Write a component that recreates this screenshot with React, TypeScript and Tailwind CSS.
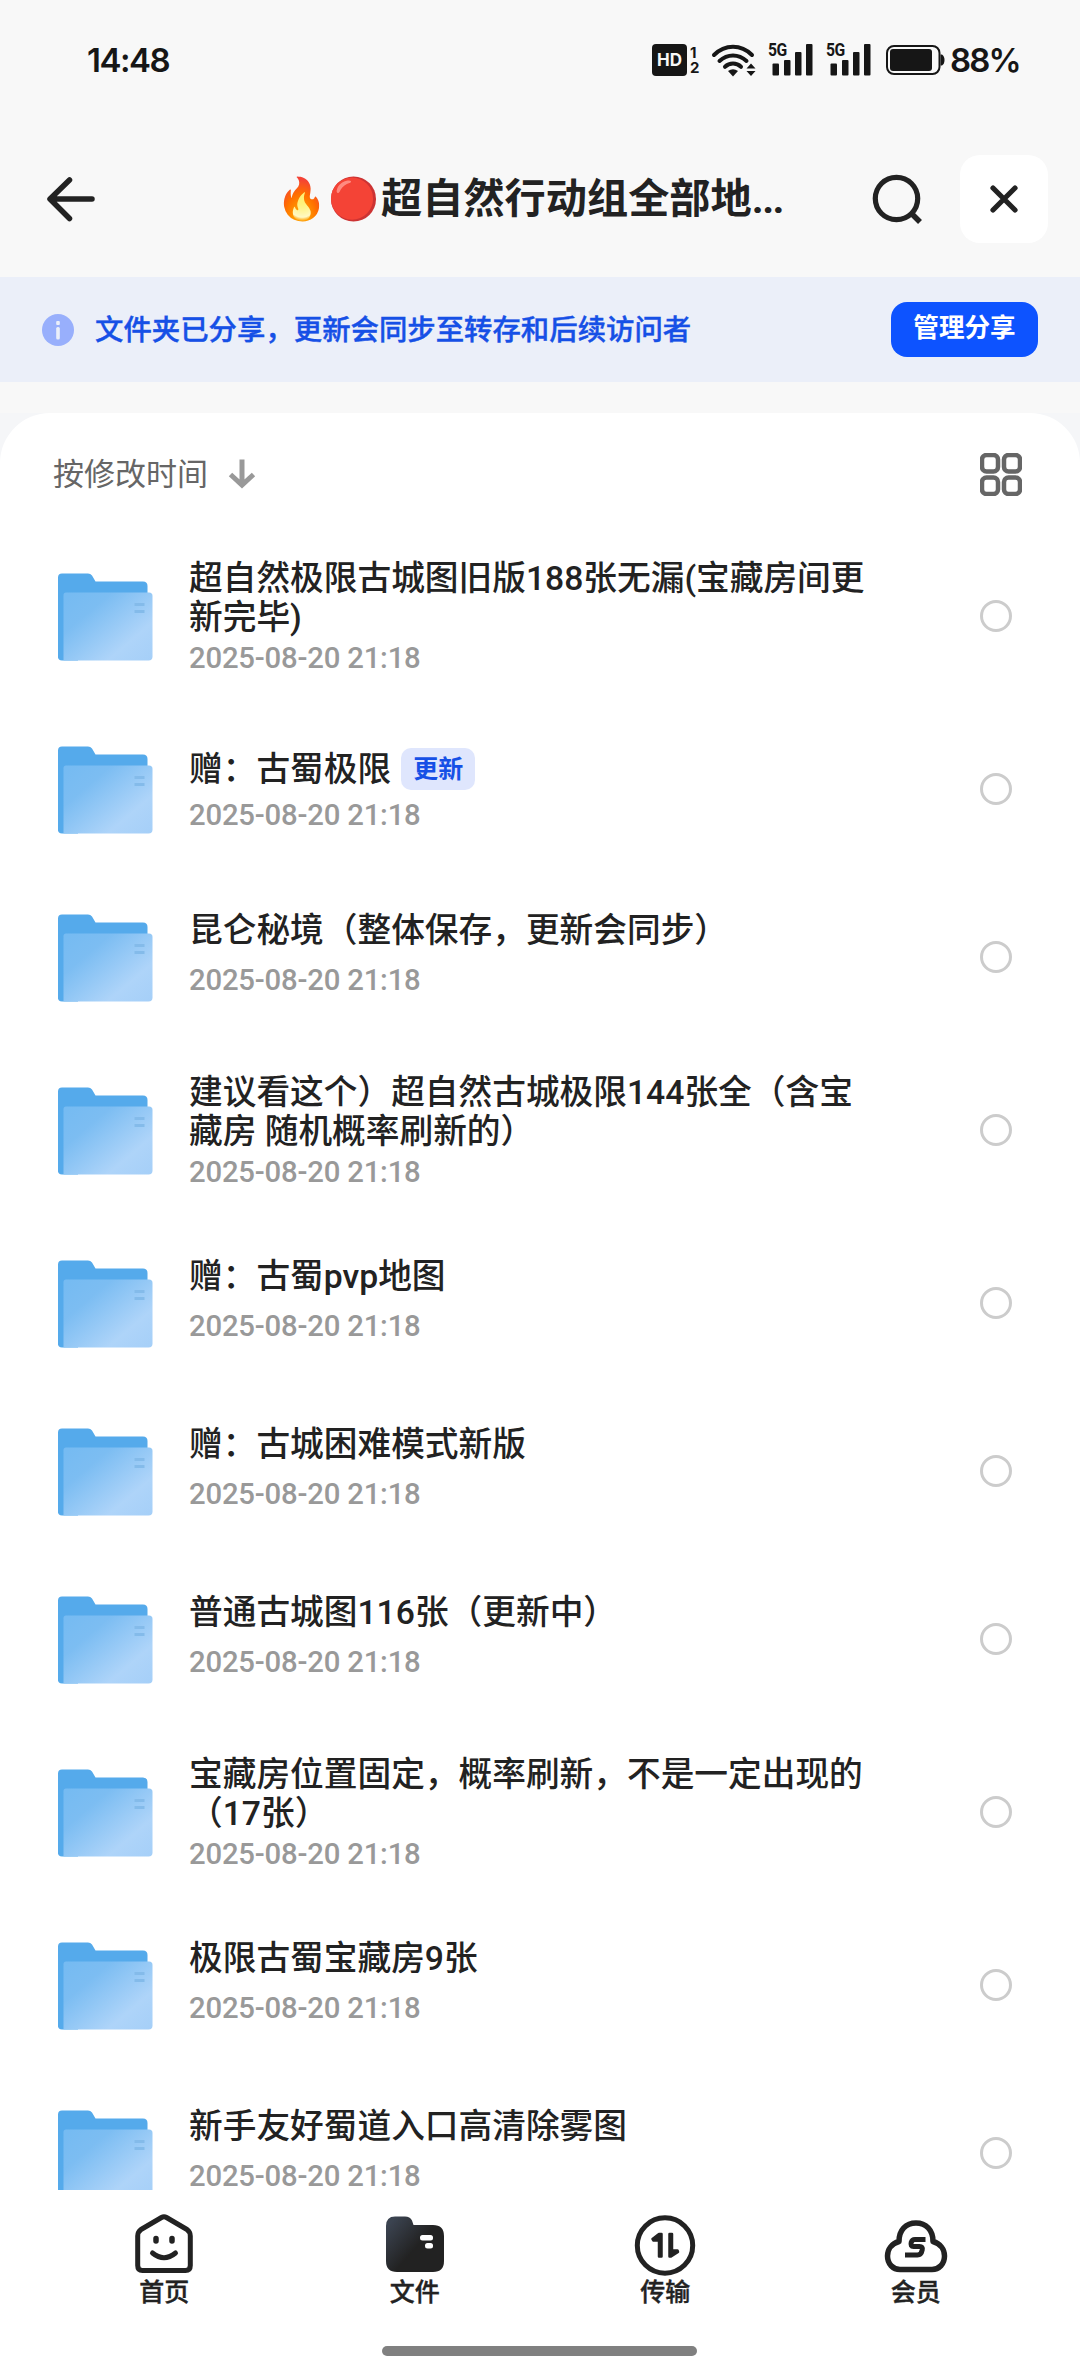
import React from "react";

interface FolderItem {
	name: string;
	time: string;
	badge?: string;
	twoLines?: boolean;
}

const TIME = "2025-08-20 21:18";

const FOLDERS: FolderItem[] = [
	{
		name: "超自然极限古城图旧版188张无漏(宝藏房间更新完毕)",
		time: TIME,
		twoLines: true,
	},
	{ name: "赠：古蜀极限", time: TIME, badge: "更新" },
	{ name: "昆仑秘境（整体保存，更新会同步）", time: TIME },
	{
		name: "建议看这个）超自然古城极限144张全（含宝藏房 随机概率刷新的）",
		time: TIME,
		twoLines: true,
	},
	{ name: "赠：古蜀pvp地图", time: TIME },
	{ name: "赠：古城困难模式新版", time: TIME },
	{ name: "普通古城图116张（更新中）", time: TIME },
	{
		name: "宝藏房位置固定，概率刷新，不是一定出现的（17张）",
		time: TIME,
		twoLines: true,
	},
	{ name: "极限古蜀宝藏房9张", time: TIME },
	{ name: "新手友好蜀道入口高清除雾图", time: TIME },
];

function WifiIcon() {
	return (
		<svg width="46" height="34" viewBox="0 0 46 34" fill="none">
			<g stroke="#161616" strokeWidth="4" strokeLinecap="round">
				<path d="M3 12C14 1 30 1 41 12" />
				<path d="M8.500 18C16.500 10.500 27.500 10.500 35.500 18" />
				<path d="M14 23.800C18.500 19.500 25.500 19.500 30 23.800" />
			</g>
			<path d="M17 28Q22 24.500 27 28L22 33.500Z" fill="#161616" />
			<path d="M40 20.500L44.500 25.500H35.500ZM40 33L35.500 28H44.500Z" fill="#161616" />
		</svg>
	);
}

function SignalIcon() {
	return (
		<div className="relative h-8 w-[45px]">
			<span className="absolute -top-[3px] left-0 origin-left scale-x-85 font-['Roboto',sans-serif] text-[18.500px] leading-[18px] font-bold tracking-[-0.500px]">
				5G
			</span>
			<svg
				className="absolute inset-0"
				width="45"
				height="32"
				viewBox="0 0 45 32"
				fill="#161616"
			>
				<rect x="4.500" y="19.500" width="6.500" height="12" rx="1" />
				<rect x="16" y="16" width="6.500" height="15.500" rx="1" />
				<rect x="27" y="8" width="6.500" height="23.500" rx="1" />
				<rect x="38" y="0" width="6.500" height="31.500" rx="1" />
			</svg>
		</div>
	);
}

function BatteryIcon() {
	return (
		<svg width="60" height="30" viewBox="0 0 60 30" fill="none">
			<rect x="1" y="1" width="52.500" height="28" rx="7" stroke="#161616" strokeWidth="2" />
			<rect x="4" y="4" width="42" height="22" rx="3" fill="#161616" />
			<path d="M54.500 9.500H56Q58.500 11 58.500 15T56 20.500H54.500Z" fill="#161616" />
		</svg>
	);
}

function StatusBar() {
	return (
		<div className="flex h-[120px] items-center pl-[87px] font-['Inter','Noto_Sans_CJK_SC',sans-serif] text-[#161616]">
			<span className="w-[90px] text-[33px] leading-none font-semibold tracking-[-1.500px]">
				14:48
			</span>
			<div className="ml-[475px] flex h-8 w-[35px] items-center justify-center rounded bg-[#161616] text-[17px] leading-none font-bold text-[#f8f8f8]">
				HD
			</div>
			<div className="ml-[3px] flex w-[18px] flex-col text-[15px] leading-[15px] font-bold">
				<span className="-mt-px">1</span>
				<span>2</span>
			</div>
			<div className="ml-[3px]">
				<WifiIcon />
			</div>
			<div className="ml-[11px] flex gap-[13px]">
				<SignalIcon />
				<SignalIcon />
			</div>
			<div className="ml-[15px]">
				<BatteryIcon />
			</div>
			<span className="ml-[4px] text-[33px] leading-none font-semibold tracking-[-1.900px]">
				88%
			</span>
		</div>
	);
}

function Header() {
	return (
		<header className="flex h-[157px] shrink-0 items-center pl-[45px] text-[#222]">
			<svg width="52" height="48" viewBox="0 0 52 48" fill="none">
				<path
					d="M24.500 5L5 24L24.500 43.500M6 24H47"
					stroke="#222"
					strokeWidth="5.500"
					strokeLinecap="round"
					strokeLinejoin="round"
				/>
			</svg>
			<h1 className="ml-[182px] flex w-[510px] items-center text-[41.200px] leading-[60px] font-bold whitespace-nowrap">
				<span className="w-[102px] -translate-x-[3px] text-[41px] tracking-[0.500px]">🔥🔴</span>
				<span>超自然行动组全部地</span>
				<span className="tracking-[-1.500px]">...</span>
			</h1>
			<svg className="ml-[81px]" width="54" height="54" viewBox="0 0 54 54" fill="none">
				<circle cx="26.500" cy="26.500" r="21.200" stroke="#222" strokeWidth="5.200" />
				<path d="M42 42L50 50" stroke="#222" strokeWidth="5.500" />
			</svg>
			<button
				type="button"
				className="ml-[36px] flex size-[88px] items-center justify-center rounded-[20px] bg-white"
			>
				<svg width="32" height="32" viewBox="0 0 32 32" fill="none">
					<path
						d="M5 5L27 27M27 5L5 27"
						stroke="#222"
						strokeWidth="5.200"
						strokeLinecap="round"
					/>
				</svg>
			</button>
		</header>
	);
}

function ShareNotice() {
	return (
		<div className="flex h-[105px] shrink-0 items-center bg-[#ebeff9] pr-[42px] pl-[42px]">
			<svg width="32" height="32" viewBox="0 0 32 32">
				<circle cx="16" cy="16" r="16" fill="#98affc" />
				<rect x="14.200" y="7" width="3.600" height="4" rx="1" fill="#ebeff9" />
				<rect x="14.200" y="13" width="3.600" height="12.500" rx="1.500" fill="#ebeff9" />
			</svg>
			<p className="ml-[21px] pt-[2px] text-[28.400px] leading-[40px] font-medium text-[#1650e6] [-webkit-text-stroke:0.4px_#1650e6]">
				文件夹已分享，更新会同步至转存和后续访问者
			</p>
			<button
				type="button"
				className="ml-auto h-[55px] w-[147px] rounded-2xl bg-[#0d53ff] pb-[2px] text-[25.600px] leading-none font-bold text-white"
			>
				管理分享
			</button>
		</div>
	);
}

function SortBar() {
	return (
		<div className="flex h-[114px] shrink-0 items-center pt-[8px] pr-[58px] pl-[53px]">
			<span className="pt-px text-[31px] leading-[44px] text-[#666]">按修改时间</span>
			<svg className="ml-[20px]" width="28" height="30" viewBox="0 0 28 30" fill="none">
				<path d="M14 0.500V26M2.500 15.500L14 26L25.500 15.500" stroke="#999" strokeWidth="5" />
			</svg>
			<svg
				className="ml-auto"
				width="42"
				height="43"
				viewBox="0 0 42 43"
				fill="none"
				stroke="#666"
				strokeWidth="4.500"
			>
				<rect x="2" y="2" width="16" height="16.500" rx="4.500" />
				<rect x="24" y="2" width="16" height="16.500" rx="4.500" />
				<rect x="2" y="24.500" width="16" height="16.500" rx="4.500" />
				<rect x="24" y="24.500" width="16" height="16.500" rx="4.500" />
			</svg>
		</div>
	);
}

function FolderIcon() {
	return (
		<svg width="95" height="88" viewBox="0 0 95 88">
			<defs>
				<linearGradient id="folder-front" x1="0" y1="0.100" x2="1" y2="1">
					<stop offset="0" stopColor="#76bbf2" />
					<stop offset="0.250" stopColor="#7cbdf2" />
					<stop offset="0.720" stopColor="#aed4f9" />
					<stop offset="1" stopColor="#a5cff8" />
				</linearGradient>
			</defs>
			<path
				d="M4 0.500H30Q32.500 0.500 34 2.500L37.500 8.500H85Q89.500 8.500 89.500 13V84H4Q0 87.500 0 83V4.500Q0 0.500 4 0.500Z"
				fill="#55aaeb"
			/>
			<path d="M0 80V83.500Q0 87.500 4 87.500H20V80Z" fill="#55aaeb" />
			<path
				d="M8 19.500H91Q94.500 19.500 94.500 23V83.500Q94.500 87.500 90.500 87.500H5.500V22Q5.500 19.500 8 19.500Z"
				fill="url(#folder-front)"
			/>
			<path d="M76.500 31.500H86.500M76.500 38.500H86.500" stroke="#84bbea" strokeWidth="2.800" />
		</svg>
	);
}

function FolderRow({ item }: { item: FolderItem }) {
	const textTop = item.twoLines ? "pt-[32px]" : item.badge ? "pt-[45px]" : "pt-[38px]";
	const timeTop = item.twoLines ? "mt-[4px]" : item.badge ? "mt-[10px]" : "mt-[14px]";
	return (
		<li
			className={`flex shrink-0 pl-[58px] ${item.twoLines ? "h-[178px]" : "h-[168px]"}`}
		>
			<div className="flex items-center pt-[2px]">
				<FolderIcon />
			</div>
			<div className={`ml-[36px] w-[690px] ${textTop}`}>
				<div className="flex items-center">
					<p className="text-[33.700px] leading-[39.300px] font-medium text-[#222]">
						{item.name}
					</p>
					{item.badge && (
						<span className="-mt-[6px] -mb-1 ml-[10px] flex h-[42px] w-[74px] items-center justify-center rounded-[10px] bg-[#dfe6fd] pt-px text-[25px] leading-none font-bold text-[#1650e6]">
							{item.badge}
						</span>
					)}
				</div>
				<p
					className={`text-[29.300px] leading-[33px] font-medium tracking-[-0.200px] text-[#999] ${timeTop}`}
				>
					{item.time}
				</p>
			</div>
			<div className="ml-[101px] flex items-center">
				<span className="size-8 rounded-full border-[3px] border-[#ccc]" />
			</div>
		</li>
	);
}

function HomeIcon() {
	return (
		<svg width="64" height="64" viewBox="0 0 64 64" fill="none" stroke="#222" strokeWidth="5" strokeLinecap="round">
			<path
				d="M29.500 5.500Q32 4 34.500 5.500L55 17.500Q58.300 20 58.300 24V53.500Q58.300 58.500 53.500 58.500H10.500Q5.700 58.500 5.700 53.500V24Q5.700 20 9 17.500Z"
				strokeLinejoin="round"
			/>
			<path d="M24 26.500V29M40 26.500V29" strokeWidth="5.500" />
			<path d="M20.500 41Q32 50.500 43.500 41" />
		</svg>
	);
}

function FilesIcon() {
	return (
		<svg width="64" height="64" viewBox="0 0 64 64">
			<defs>
				<linearGradient id="files-tab" x1="0" y1="0.200" x2="0.600" y2="0.700">
					<stop offset="0" stopColor="#3b4350" />
					<stop offset="0.800" stopColor="#222" />
				</linearGradient>
			</defs>
			<path
				d="M12 4.500H22Q27 4.500 29 8.500L30.500 13H50Q61 13 61 24V49Q61 60 50 60H14Q3 60 3 49V14Q3 4.500 12 4.500Z"
				fill="url(#files-tab)"
			/>
			<rect x="37" y="23" width="13" height="5.500" rx="2.500" fill="#fff" />
			<rect x="42" y="31" width="8" height="5.500" rx="2.500" fill="#fff" />
		</svg>
	);
}

function TransferIcon() {
	return (
		<svg width="64" height="64" viewBox="0 0 64 64" fill="none">
			<circle cx="32" cy="33.500" r="27.700" stroke="#222" strokeWidth="5" />
			<g fill="#222" stroke="#222" strokeWidth="2.500" strokeLinejoin="round">
				<path d="M28.500 22V44.500H26V28.500H20.500L19.500 27L26 22Z" />
				<path d="M36.500 22H39V38.500H44.500L45 40L38 44.500H36.500Z" />
			</g>
		</svg>
	);
}

function MemberIcon() {
	return (
		<svg width="68" height="64" viewBox="0 0 68 64" fill="none" stroke="#222">
			<path
				d="M17 29.500C17 18 24 11 34 11S51 18 51 29.500C58 31.500 62.500 37 62.500 44C62.500 52 57 57.500 50 57.500H18C11 57.500 5.500 52 5.500 44C5.500 37 10 31.500 17 29.500Z"
				strokeWidth="5.500"
				strokeLinejoin="round"
			/>
			<path
				d="M43.500 27.500H33Q30 27.500 29.200 30.500Q28.200 34.500 31.500 34.500H37.500Q41 34.500 40.200 38Q39.200 43 35.500 43H23"
				strokeWidth="5"
			/>
		</svg>
	);
}

const TABS = [
	{ label: "首页", Icon: HomeIcon },
	{ label: "文件", Icon: FilesIcon },
	{ label: "传输", Icon: TransferIcon },
	{ label: "会员", Icon: MemberIcon },
];

function TabBar() {
	return (
		<nav className="flex px-[39px] pt-[22px]">
			{TABS.map(({ label, Icon }) => (
				<button
					key={label}
					type="button"
					className="flex flex-1 flex-col items-center text-[#222]"
				>
					<Icon />
					<span className="pt-px text-[25px] leading-[32px] font-medium [-webkit-text-stroke:0.4px_#222]">
						{label}
					</span>
				</button>
			))}
		</nav>
	);
}

export default function App() {
	return (
		<div className="flex h-[2374px] w-[1080px] flex-col overflow-hidden bg-[#f8f8f8] font-['Roboto','Noto_Sans_CJK_SC',sans-serif]">
			<StatusBar />
			<Header />
			<ShareNotice />
			<main className="mt-[31px] h-[1777px] shrink-0 bg-[#f5f6f8]">
				<div className="flex h-full flex-col overflow-hidden rounded-t-[50px] bg-white">
					<SortBar />
					<ul className="flex flex-col">
						{FOLDERS.map((item) => (
							<FolderRow key={item.name} item={item} />
						))}
					</ul>
				</div>
			</main>
			<footer className="flex flex-1 flex-col bg-white">
				<TabBar />
				<div className="mx-auto mt-auto mb-[18px] h-[10px] w-[315px] -translate-x-px rounded-full bg-[#808080]" />
			</footer>
		</div>
	);
}
